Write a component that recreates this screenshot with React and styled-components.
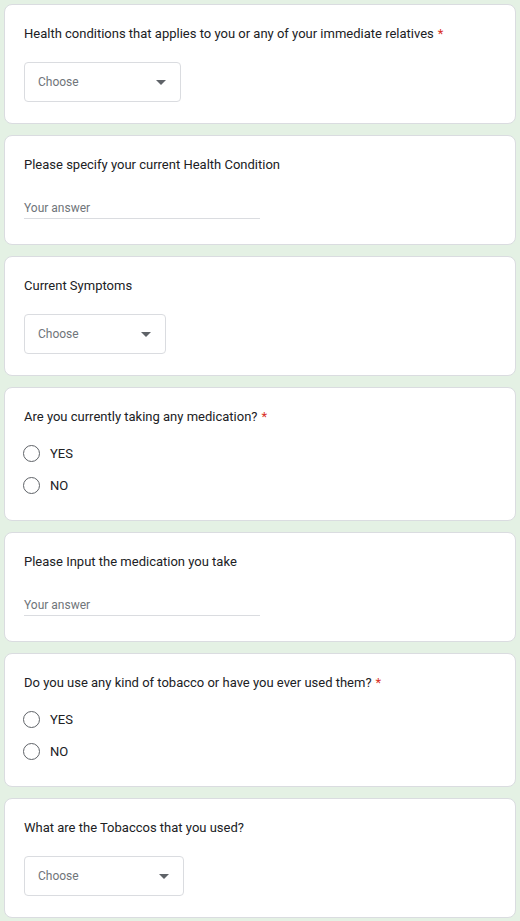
import React from "react";
import styled, { createGlobalStyle } from "styled-components";

const Global = createGlobalStyle`
  html, body { margin: 0; padding: 0; background: #e4f1e4; }
  body { font-family: Roboto, "Noto Sans", Arial, sans-serif; color: #202124; }
`;

const Page = styled.div`
  display: flex;
  flex-direction: column;
  gap: 11px;
  padding: 4px 4px 4px 4px;
  width: 512px;
`;

const Card = styled.section`
  background: #fff;
  border: 1px solid #dadce0;
  border-radius: 8px;
  height: ${(p) => p.$h}px;
  box-sizing: border-box;
  padding: 19px 19px 0;
  display: flex;
  flex-direction: column;
  align-items: flex-start;
`;

const Title = styled.div`
  font-size: 13px;
  line-height: 20px;
  color: #202124;
`;

const Req = styled.span`
  color: #d93025;
  margin-left: 4px;
`;

const Select = styled.div`
  margin-top: 18px;
  width: ${(p) => p.$w}px;
  height: 40px;
  box-sizing: border-box;
  border: 1px solid #dadce0;
  border-radius: 4px;
  display: flex;
  align-items: center;
  justify-content: space-between;
  padding: 0 14px 0 13px;
  font-size: 12px;
  color: #70757a;
`;

const Arrow = styled.span`
  width: 0;
  height: 0;
  border-left: 5px solid transparent;
  border-right: 5px solid transparent;
  border-top: 5px solid #5f6368;
`;

const Answer = styled.div`
  margin-top: 23px;
  width: 236px;
  line-height: 20px;
  font-size: 12px;
  color: #70757a;
  border-bottom: 1px solid #dadce0;
`;

const Options = styled.div`
  margin-top: 10px;
  display: flex;
  flex-direction: column;
`;

const Option = styled.label`
  height: 32px;
  display: flex;
  align-items: center;
  gap: 10px;
  font-size: 13px;
  color: #202124;
`;

const Circle = styled.span`
  width: 17px;
  height: 17px;
  box-sizing: border-box;
  border: 1.5px solid #5f6368;
  border-radius: 50%;
  margin-left: -1px;
`;

const DropCard = ({ title, req, w }) => (
  <Card $h={120}>
    <Title>
      {title}
      {req && <Req>*</Req>}
    </Title>
    <Select $w={w}>
      <span>Choose</span>
      <Arrow />
    </Select>
  </Card>
);

const TextCard = ({ title }) => (
  <Card $h={110}>
    <Title>{title}</Title>
    <Answer>Your answer</Answer>
  </Card>
);

const RadioCard = ({ title, req }) => (
  <Card $h={134}>
    <Title>
      {title}
      {req && <Req>*</Req>}
    </Title>
    <Options>
      {["YES", "NO"].map((o) => (
        <Option key={o}>
          <Circle />
          {o}
        </Option>
      ))}
    </Options>
  </Card>
);

export default function App() {
  return (
    <>
      <Global />
      <Page>
        <DropCard title="Health conditions that applies to you or any of your immediate relatives" req w={157} />
        <TextCard title="Please specify your current Health Condition" />
        <DropCard title="Current Symptoms" w={142} />
        <RadioCard title="Are you currently taking any medication?" req />
        <TextCard title="Please Input the medication you take" />
        <RadioCard title="Do you use any kind of tobacco or have you ever used them?" req />
        <DropCard title="What are the Tobaccos that you used?" w={160} />
      </Page>
    </>
  );
}
